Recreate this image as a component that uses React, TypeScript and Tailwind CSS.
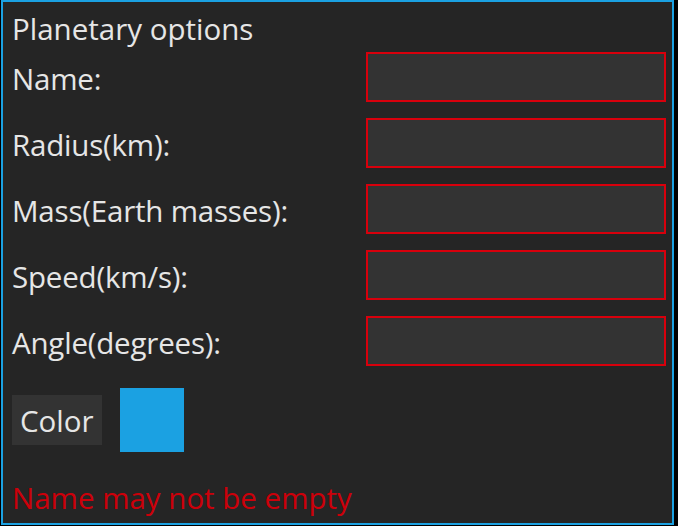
const FIELDS = [
  "Name:",
  "Radius(km):",
  "Mass(Earth masses):",
  "Speed(km/s):",
  "Angle(degrees):",
];

export default function App() {
  return (
    <div className="w-[678px] h-[526px] bg-black overflow-hidden">
      <div
        className="ml-[1px] w-[673px] h-[525px] border-2 border-[#1ba1e2] bg-[#252525] pt-[7px] pl-[9px] pr-[6px] text-[29.5px] leading-[40px] text-[#e6e6e6]"
        style={{ fontFamily: '"Open Sans", "DejaVu Sans", sans-serif' }}
      >
        <div>Planetary options</div>

        <div className="mt-[3px] flex flex-col gap-4">
          {FIELDS.map((label) => (
            <div key={label} className="flex justify-between items-start h-[50px]">
              <span className="pt-[7px] tracking-[-0.2px]">{label}</span>
              <input
                type="text"
                className="w-[300px] h-[50px] bg-[#333333] border-2 border-[#d8000c] outline-none px-2 text-[#e6e6e6]"
              />
            </div>
          ))}
        </div>

        <div className="mt-[22px] flex items-center gap-[18px] h-[64px]">
          <button className="w-[90px] h-[50px] bg-[#333333] text-left pl-[8px] leading-[50px] pt-[1px]">
            Color
          </button>
          <div className="w-[64px] h-[64px] bg-[#1ba1e2]" />
        </div>

        <div className="mt-[26px] text-[#cc000a]">Name may not be empty</div>
      </div>
    </div>
  );
}
